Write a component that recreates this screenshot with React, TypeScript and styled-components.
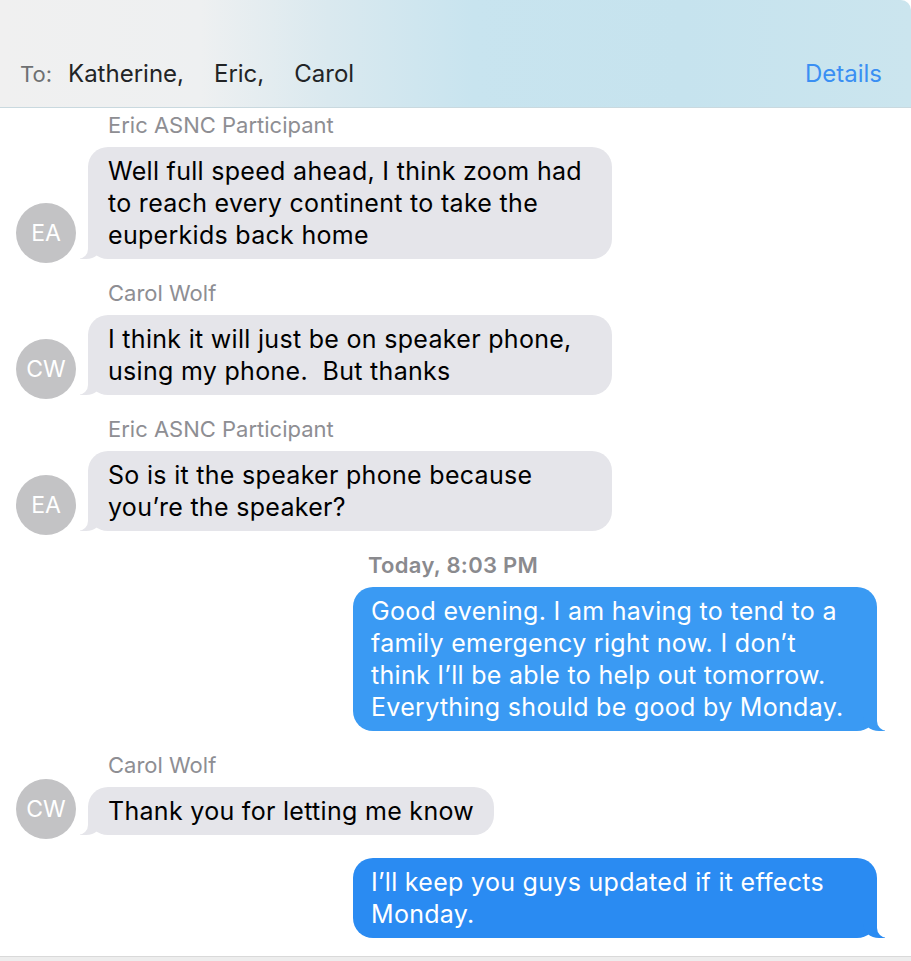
import styled, { createGlobalStyle } from 'styled-components';

const GlobalStyle = createGlobalStyle`
  html, body {
    margin: 0;
    padding: 0;
    background: #ffffff;
  }
  body {
    font-family: Inter, "Noto Sans", "Liberation Sans", sans-serif;
  }
`;

type Incoming = {
  kind: 'in';
  name: string;
  initials: string;
  text: string;
};

type Outgoing = {
  kind: 'out';
  text: string;
  shade: 'light' | 'dark';
  stamp?: string;
};

type Message = Incoming | Outgoing;

const messages: Message[] = [
  {
    kind: 'in',
    name: 'Eric ASNC Participant',
    initials: 'EA',
    text: 'Well full speed ahead, I think zoom had to reach every continent to take the euperkids back home',
  },
  {
    kind: 'in',
    name: 'Carol Wolf',
    initials: 'CW',
    text: 'I think it will just be on speaker phone, using my phone.  But thanks',
  },
  {
    kind: 'in',
    name: 'Eric ASNC Participant',
    initials: 'EA',
    text: 'So is it the speaker phone because you\u2019re the speaker?',
  },
  {
    kind: 'out',
    stamp: 'Today, 8:03 PM',
    shade: 'light',
    text: 'Good evening. I am having to tend to a family emergency right now. I don\u2019t think I\u2019ll be able to help out tomorrow. Everything should be good by Monday.',
  },
  {
    kind: 'in',
    name: 'Carol Wolf',
    initials: 'CW',
    text: 'Thank you for letting me know',
  },
  {
    kind: 'out',
    shade: 'dark',
    text: 'I\u2019ll keep you guys updated if it effects Monday.',
  },
];

const blues = {
  light: '#3a9af3',
  dark: '#2a8bf2',
};

const App = () => {
  return (
    <Window>
      <GlobalStyle />
      <Header>
        <Recipients>
          <ToLabel>To:</ToLabel>
          <Recipient>Katherine,</Recipient>
          <Recipient>Eric,</Recipient>
          <Recipient>Carol</Recipient>
        </Recipients>
        <DetailsLink>Details</DetailsLink>
      </Header>
      <Transcript>
        {messages.map((m, i) =>
          m.kind === 'in' ? (
            <Group key={i}>
              <SenderName>{m.name}</SenderName>
              <IncomingRow>
                <Avatar>{m.initials}</Avatar>
                <GrayBubble>{m.text}</GrayBubble>
              </IncomingRow>
            </Group>
          ) : (
            <Group key={i}>
              {m.stamp && <TimeStamp>{m.stamp}</TimeStamp>}
              <OutgoingRow>
                <BlueBubble $shade={m.shade}>{m.text}</BlueBubble>
              </OutgoingRow>
            </Group>
          ),
        )}
      </Transcript>
      <Footer />
    </Window>
  );
};

const Window = styled.div`
  display: flex;
  flex-direction: column;
  height: 100vh;
  background: #ffffff;
  overflow: hidden;
`;

const Header = styled.header`
  height: 108px;
  flex-shrink: 0;
  display: flex;
  align-items: flex-end;
  justify-content: space-between;
  padding: 0 29px 19px 20px;
  box-sizing: border-box;
  border-bottom: 1px solid #c9d9df;
  border-top-right-radius: 10px;
  background: linear-gradient(
    90deg,
    #f0f0f0 0%,
    #eef0f1 22%,
    #dae9ef 36%,
    #c8e4ef 52%,
    #c6e3ee 75%,
    #cbe5ee 100%
  );
`;

const Recipients = styled.div`
  display: flex;
  align-items: baseline;
`;

const ToLabel = styled.span`
  font-size: 22px;
  color: #6e7072;
  margin-right: 16px;
`;

const Recipient = styled.span`
  font-size: 24px;
  color: #222426;
  margin-right: 30px;
`;

const DetailsLink = styled.span`
  font-size: 24px;
  color: #3a8ff3;
`;

const Transcript = styled.main`
  flex: 1;
  display: flex;
  flex-direction: column;
  gap: 23px;
  padding: 6px 24px 0 16px;
`;

const Group = styled.section`
  display: flex;
  flex-direction: column;
  gap: 10px;
`;

const SenderName = styled.div`
  font-size: 22px;
  line-height: 23px;
  color: #8e8e93;
  padding-left: 92px;
`;

const TimeStamp = styled.div`
  font-size: 22px;
  line-height: 23px;
  font-weight: 600;
  letter-spacing: 0.3px;
  color: #8a8a8e;
  padding-left: 352px;
`;

const IncomingRow = styled.div`
  display: flex;
  align-items: flex-end;
  gap: 12px;
`;

const OutgoingRow = styled.div`
  display: flex;
  justify-content: flex-end;
  padding-right: 10px;
`;

const Avatar = styled.div`
  width: 60px;
  height: 60px;
  border-radius: 50%;
  flex-shrink: 0;
  margin: -16px 0 -4px;
  background: #c3c3c5;
  color: #ffffff;
  font-size: 23px;
  display: flex;
  align-items: center;
  justify-content: center;
`;

const Bubble = styled.div`
  position: relative;
  box-sizing: border-box;
  max-width: 524px;
  font-size: 25px;
  line-height: 32px;
  letter-spacing: 0.3px;
  white-space: pre-wrap;
  border-radius: 20px;
  z-index: 0;

  &::before,
  &::after {
    content: '';
    position: absolute;
    bottom: 0;
    height: 22px;
    z-index: -1;
  }
`;

const GrayBubble = styled(Bubble)`
  background: #e5e5ea;
  color: #000000;
  padding: 8px 20px;

  &::before {
    left: -8px;
    width: 22px;
    background: #e5e5ea;
    border-bottom-right-radius: 16px 14px;
  }

  &::after {
    left: -12px;
    width: 12px;
    background: #ffffff;
    border-bottom-right-radius: 10px;
    z-index: 0;
  }
`;

const BlueBubble = styled(Bubble)<{ $shade: 'light' | 'dark' }>`
  width: 524px;
  background: ${p => blues[p.$shade]};
  color: #ffffff;
  padding: 8px 18px;

  &::before {
    right: -8px;
    width: 22px;
    background: ${p => blues[p.$shade]};
    border-bottom-left-radius: 16px 14px;
  }

  &::after {
    right: -12px;
    width: 12px;
    background: #ffffff;
    border-bottom-left-radius: 10px;
    z-index: 0;
  }
`;

const Footer = styled.footer`
  height: 4px;
  flex-shrink: 0;
  border-top: 1px solid #d9d9d9;
  background: #ededed;
`;

export default App;
